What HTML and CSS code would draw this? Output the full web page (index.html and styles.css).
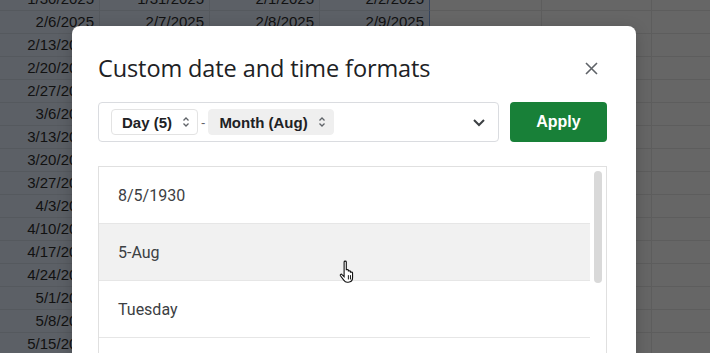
FILE: index.html
```html
<!DOCTYPE html>
<html lang="en">
<head>
  <meta charset="UTF-8">
  <meta name="viewport" content="width=device-width, initial-scale=1.0">
  <title>Custom date and time formats</title>
  <link rel="stylesheet" href="styles.css">
</head>
<body>
  <div class="sheet" id="sheet"></div>

  <div class="dialog">
    <div class="dialog-head">
      <h1>Custom date and time formats</h1>
      <button class="close" aria-label="Close">
        <svg width="13" height="13" viewBox="0 0 13 13"><path d="M1 1L12 12M12 1L1 12" stroke="#5f6368" stroke-width="1.6" fill="none"/></svg>
      </button>
    </div>

    <div class="format-row">
      <div class="format-field">
        <span class="chip">Day (5)
          <svg class="updown" width="8" height="12" viewBox="0 0 8 12"><path d="M1.5 4.5L4 2L6.5 4.5M1.5 7.5L4 10L6.5 7.5" stroke="#5f6368" stroke-width="1.3" fill="none"/></svg>
        </span>
        <span class="sep">-</span>
        <span class="chip chip-active">Month (Aug)
          <svg class="updown" width="8" height="12" viewBox="0 0 8 12"><path d="M1.5 4.5L4 2L6.5 4.5M1.5 7.5L4 10L6.5 7.5" stroke="#5f6368" stroke-width="1.3" fill="none"/></svg>
        </span>
        <svg class="caret" width="14" height="9" viewBox="0 0 14 9"><path d="M2 2L7 7L12 2" stroke="#3c4043" stroke-width="2" fill="none"/></svg>
      </div>
      <button class="apply">Apply</button>
    </div>

    <div class="formats">
      <div class="options">
        <div class="option">8/5/1930</div>
        <div class="option hover">5-Aug</div>
        <div class="option">Tuesday</div>
        <div class="option">August 5, 1930</div>
      </div>
      <div class="track"><div class="thumb"></div></div>
    </div>
  </div>

  <svg class="pointer" width="22" height="25" viewBox="0 0 18 20">
    <path d="M5 2.2c0-.9 1.8-.9 1.8 0V9c0-.8 1.7-.8 1.7 0v1c0-.8 1.7-.8 1.7 0v1c0-.8 1.7-.8 1.7 0v4c0 2-1.2 3.8-3.5 3.8H7.5c-1.3 0-2.1-.7-2.8-1.7L2 13.5c-.6-.9.6-1.8 1.3-1L5 14.2z" fill="#fff" stroke="#111" stroke-width=".9"/>
    <path d="M8.5 13v3.5M10.2 13v3.5M11.9 13v3.5" stroke="#111" stroke-width=".8"/>
  </svg>

  <script>
    var sheet = document.getElementById('sheet');
    var start = new Date(2025, 0, 23);

    for (var r = 0; r < 17; r++) {
      for (var c = 0; c < 7; c++) {
        var cell = document.createElement('div');
        cell.className = 'cell';
        if (c < 4) {
          cell.className += ' picked';
          if (c == 3) cell.className += ' edge';
          // cells behind the dialog stay empty
          if (c == 0 || r < 3) {
            var d = new Date(start);
            d.setDate(start.getDate() + r * 7 + c);
            cell.textContent = (d.getMonth() + 1) + '/' + d.getDate() + '/' + d.getFullYear();
          }
        }
        sheet.appendChild(cell);
      }
    }
  </script>
</body>
</html>
```

FILE: styles.css
```css
body {
  margin: 0;
  height: 353px;
  overflow: hidden;
  background-color: #666;
  font-family: "Liberation Sans", Arial, sans-serif;
}
.sheet {
  display: grid;
  grid-template-columns: 100px 110px 110px 110px 112px 110px 110px;
  grid-auto-rows: 23px;
  margin-top: -35px;
}
.cell {
  box-sizing: border-box;
  border-right: 1px solid #5d5d5d;
  border-bottom: 1px solid #5d5d5d;
  padding: 0 5px;
  font-size: 15px;
  line-height: 22px;
  color: #111;
  text-align: right;
  white-space: nowrap;
  overflow: hidden;
}
.cell.picked {
  background-color: #5c6066;
  border-color: #55595e;
}
.cell.edge {
  border-right-color: #34445e;
}

.dialog {
  position: absolute;
  left: 72px;
  top: 26px;
  width: 564px;
  height: 360px;
  box-sizing: border-box;
  padding: 20px 29px 0 26px;
  background-color: #fff;
  border-radius: 8px;
  box-shadow: 0 4px 16px rgba(0, 0, 0, 0.2);
}
.dialog-head {
  display: flex;
  align-items: center;
  justify-content: space-between;
  height: 44px;
}
.dialog-head h1 {
  margin: 0;
  font-family: "Open Sans", sans-serif;
  font-size: 23.5px;
  font-weight: 400;
  color: #202124;
  letter-spacing: -0.1px;
}
.close {
  width: 24px;
  height: 24px;
  margin-right: 4px;
  padding: 0;
  border: none;
  background: none;
  display: flex;
  align-items: center;
  justify-content: center;
}

.format-row {
  display: flex;
  gap: 11px;
  margin-top: 12px;
  height: 40px;
}
.format-field {
  flex: 1;
  display: flex;
  align-items: center;
  padding: 0 12px;
  border: 1px solid #dadce0;
  border-radius: 4px;
}
.chip {
  display: flex;
  align-items: center;
  gap: 10px;
  height: 26px;
  box-sizing: border-box;
  padding: 0 7px 0 10px;
  border: 1px solid #e3e3e3;
  border-radius: 4px;
  font-size: 15px;
  font-weight: bold;
  color: #202124;
}
.chip-active {
  background-color: #efefef;
  border-color: #efefef;
}
.sep {
  margin: 0 3px 0 3px;
  font-size: 13px;
  color: #5f6368;
}
.caret {
  margin-left: auto;
  margin-right: 0;
}
.apply {
  width: 97px;
  border: none;
  border-radius: 4px;
  background-color: #188038;
  color: #fff;
  font-family: "Liberation Sans", Arial, sans-serif;
  font-size: 16px;
  font-weight: bold;
}

.formats {
  display: flex;
  margin-top: 24px;
  height: 200px;
  border: 1px solid #e0e0e0;
}
.options {
  flex: 1;
}
.option {
  height: 57px;
  box-sizing: border-box;
  border-bottom: 1px solid #e6e6e6;
  padding-left: 19px;
  display: flex;
  align-items: center;
  font-family: Roboto, sans-serif;
  font-size: 16px;
  color: #3c4043;
}
.option.hover {
  background-color: #f1f1f1;
}
.track {
  width: 16px;
  padding-top: 4px;
  display: flex;
  justify-content: center;
}
.thumb {
  width: 8px;
  height: 112px;
  border-radius: 4px;
  background-color: #d9d9d9;
}

.pointer {
  position: absolute;
  left: 338px;
  top: 259px;
}
```
